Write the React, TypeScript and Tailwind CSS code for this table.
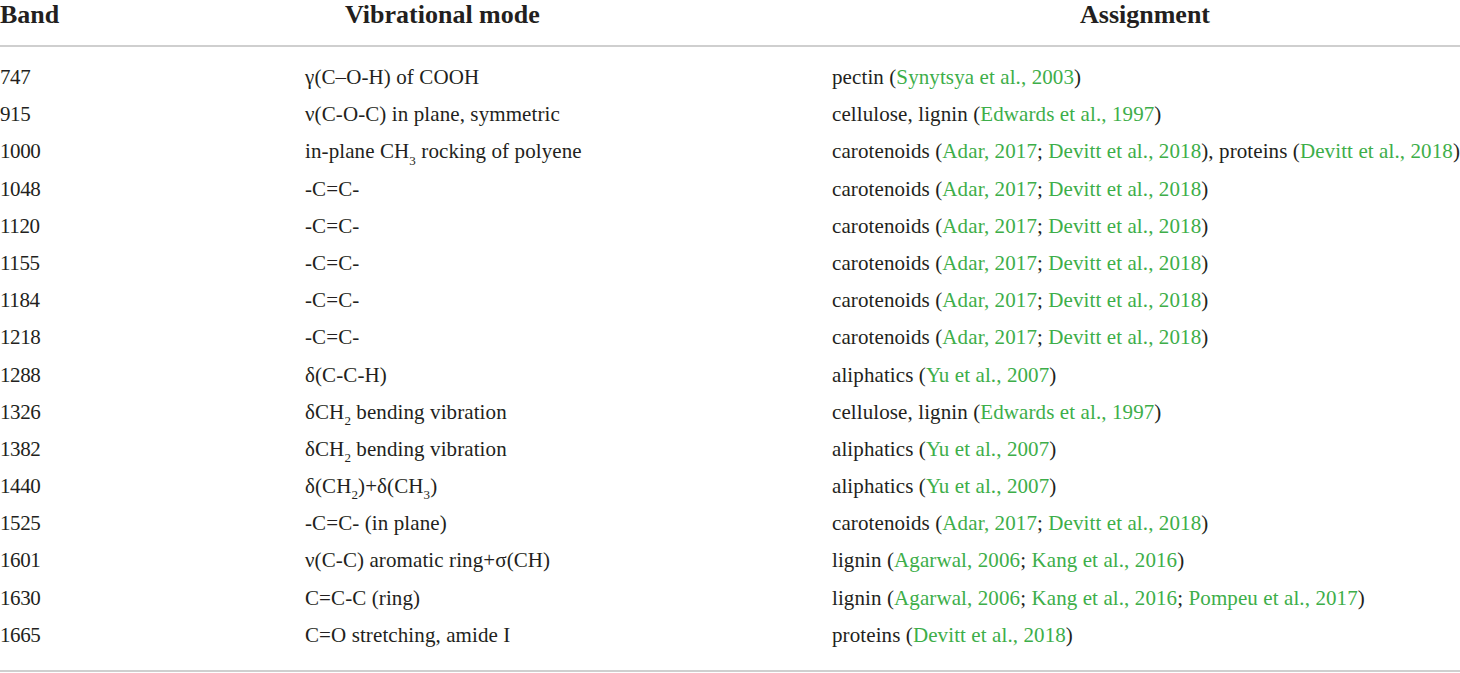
import React from "react";

type Part = string | { r: string };
const G = (r: string) => ({ r });

const Sub = ({ c }: { c: string }) => (
  <sub className="text-[13px] align-baseline" style={{ verticalAlign: "-3px" }}>{c}</sub>
);

const rows: { band: string; mode: React.ReactNode; assign: Part[] }[] = [
  { band: "747", mode: <>γ(C–O-H) of COOH</>, assign: ["pectin (", G("Synytsya et al., 2003"), ")"] },
  { band: "915", mode: <>ν(C-O-C) in plane, symmetric</>, assign: ["cellulose, lignin (", G("Edwards et al., 1997"), ")"] },
  {
    band: "1000",
    mode: <>in-plane CH<Sub c="3" /> rocking of polyene</>,
    assign: ["carotenoids (", G("Adar, 2017"), "; ", G("Devitt et al., 2018"), "), proteins (", G("Devitt et al., 2018"), ")"],
  },
  { band: "1048", mode: <>-C=C-</>, assign: ["carotenoids (", G("Adar, 2017"), "; ", G("Devitt et al., 2018"), ")"] },
  { band: "1120", mode: <>-C=C-</>, assign: ["carotenoids (", G("Adar, 2017"), "; ", G("Devitt et al., 2018"), ")"] },
  { band: "1155", mode: <>-C=C-</>, assign: ["carotenoids (", G("Adar, 2017"), "; ", G("Devitt et al., 2018"), ")"] },
  { band: "1184", mode: <>-C=C-</>, assign: ["carotenoids (", G("Adar, 2017"), "; ", G("Devitt et al., 2018"), ")"] },
  { band: "1218", mode: <>-C=C-</>, assign: ["carotenoids (", G("Adar, 2017"), "; ", G("Devitt et al., 2018"), ")"] },
  { band: "1288", mode: <>δ(C-C-H)</>, assign: ["aliphatics (", G("Yu et al., 2007"), ")"] },
  { band: "1326", mode: <>δCH<Sub c="2" /> bending vibration</>, assign: ["cellulose, lignin (", G("Edwards et al., 1997"), ")"] },
  { band: "1382", mode: <>δCH<Sub c="2" /> bending vibration</>, assign: ["aliphatics (", G("Yu et al., 2007"), ")"] },
  { band: "1440", mode: <>δ(CH<Sub c="2" />)+δ(CH<Sub c="3" />)</>, assign: ["aliphatics (", G("Yu et al., 2007"), ")"] },
  { band: "1525", mode: <>-C=C- (in plane)</>, assign: ["carotenoids (", G("Adar, 2017"), "; ", G("Devitt et al., 2018"), ")"] },
  { band: "1601", mode: <>ν(C-C) aromatic ring+σ(CH)</>, assign: ["lignin (", G("Agarwal, 2006"), "; ", G("Kang et al., 2016"), ")"] },
  {
    band: "1630",
    mode: <>C=C-C (ring)</>,
    assign: ["lignin (", G("Agarwal, 2006"), "; ", G("Kang et al., 2016"), "; ", G("Pompeu et al., 2017"), ")"],
  },
  { band: "1665", mode: <>C=O stretching, amide I</>, assign: ["proteins (", G("Devitt et al., 2018"), ")"] },
];

export default function App() {
  return (
    <div
      className="w-[1460px] h-[673px] bg-white text-[#231f20] overflow-hidden"
      style={{ fontFamily: '"Liberation Serif", "Times New Roman", serif' }}
    >
      <div className="grid grid-cols-[305px_527px_1fr] h-[47px] border-b-2 border-[#cfcfcf] text-[26px] font-bold leading-[30px] whitespace-nowrap">
        <div>Band</div>
        <div className="pl-[40px]">Vibrational mode</div>
        <div className="pl-[248px]">Assignment</div>
      </div>
      <div className="pt-[12px] pb-[16px] border-b-2 border-[#cfcfcf]">
        {rows.map((r) => (
          <div
            key={r.band}
            className="grid grid-cols-[305px_527px_1fr] h-[37.2px] text-[21px] tracking-[0.1px] leading-[37.2px] whitespace-nowrap"
          >
            <div className="tracking-[-0.4px]">{r.band}</div>
            <div>{r.mode}</div>
            <div>
              {r.assign.map((p, i) =>
                typeof p === "string" ? (
                  <span key={i}>{p}</span>
                ) : (
                  <span key={i} className="text-[#3dae49]">
                    {p.r}
                  </span>
                )
              )}
            </div>
          </div>
        ))}
      </div>
    </div>
  );
}
